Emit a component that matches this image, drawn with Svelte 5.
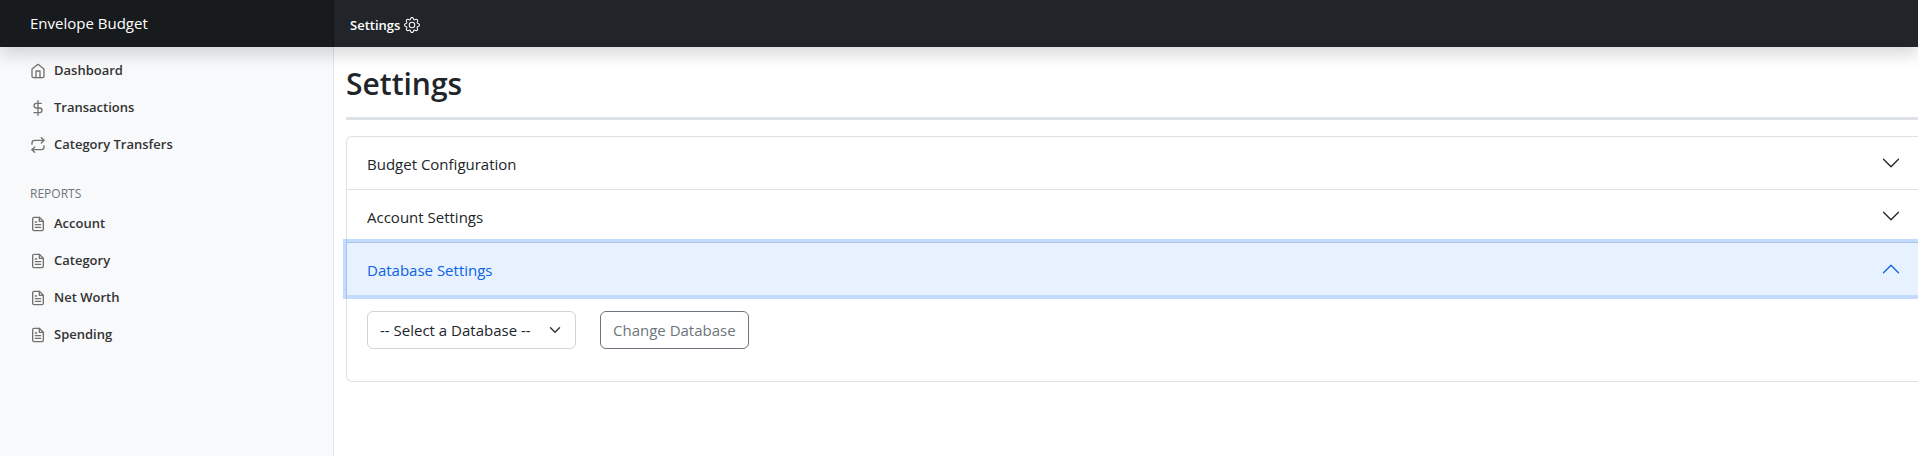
<script>
  const mainLinks = [
    { label: 'Dashboard', icon: 'home' },
    { label: 'Transactions', icon: 'dollar' },
    { label: 'Category Transfers', icon: 'repeat' }
  ];
  const reportLinks = ['Account', 'Category', 'Net Worth', 'Spending'];
  const sections = ['Budget Configuration', 'Account Settings', 'Database Settings'];

  let open = $state(2);
  let focused = $state(2);

  function toggle(i) {
    open = open === i ? -1 : i;
    focused = i;
  }
</script>

{#snippet icon(name)}
  <svg class="icon" viewBox="0 0 24 24" aria-hidden="true">
    {#if name === 'home'}
      <path d="M3 9l9-7 9 7v11a2 2 0 0 1-2 2H5a2 2 0 0 1-2-2z" />
      <path d="M9 22V12h6v10" />
    {:else if name === 'dollar'}
      <path d="M12 1v22" />
      <path d="M17 5H9.500a3.500 3.500 0 0 0 0 7h5a3.500 3.500 0 0 1 0 7H6" />
    {:else if name === 'repeat'}
      <path d="M17 1l4 4-4 4" />
      <path d="M3 11V9a4 4 0 0 1 4-4h14" />
      <path d="M7 23l-4-4 4-4" />
      <path d="M21 13v2a4 4 0 0 1-4 4H3" />
    {:else}
      <path d="M14 2H6a2 2 0 0 0-2 2v16a2 2 0 0 0 2 2h12a2 2 0 0 0 2-2V8z" />
      <path d="M14 2v6h6" />
      <path d="M16 13H8M16 17H8M10 9H8" />
    {/if}
  </svg>
{/snippet}

<div class="page">
  <header class="topbar">
    <a class="brand" href="#home">Envelope Budget</a>
    <a class="top-link" href="#settings">
      Settings
      <svg class="gear" viewBox="0 0 16 16" aria-hidden="true">
        <path d="M8 4.754a3.246 3.246 0 1 0 0 6.492 3.246 3.246 0 0 0 0-6.492zM5.754 8a2.246 2.246 0 1 1 4.492 0 2.246 2.246 0 0 1-4.492 0z" />
        <path d="M9.796 1.343c-.527-1.790-3.065-1.790-3.592 0l-.094.319a.873.873 0 0 1-1.255.520l-.292-.160c-1.640-.892-3.433.902-2.540 2.541l.159.292a.873.873 0 0 1-.520 1.255l-.319.094c-1.790.527-1.790 3.065 0 3.592l.319.094a.873.873 0 0 1 .520 1.255l-.160.292c-.892 1.640.901 3.434 2.541 2.540l.292-.159a.873.873 0 0 1 1.255.520l.094.319c.527 1.790 3.065 1.790 3.592 0l.094-.319a.873.873 0 0 1 1.255-.520l.292.160c1.640.893 3.434-.902 2.540-2.541l-.159-.292a.873.873 0 0 1 .520-1.255l.319-.094c1.790-.527 1.790-3.065 0-3.592l-.319-.094a.873.873 0 0 1-.520-1.255l.160-.292c.893-1.640-.902-3.433-2.541-2.540l-.292.159a.873.873 0 0 1-1.255-.520l-.094-.319zm-2.633.283c.246-.835 1.428-.835 1.674 0l.094.319a1.873 1.873 0 0 0 2.693 1.115l.291-.160c.764-.415 1.600.420 1.184 1.185l-.159.292a1.873 1.873 0 0 0 1.116 2.692l.318.094c.835.246.835 1.428 0 1.674l-.319.094a1.873 1.873 0 0 0-1.115 2.693l.160.291c.415.764-.420 1.600-1.185 1.184l-.291-.159a1.873 1.873 0 0 0-2.693 1.116l-.094.318c-.246.835-1.428.835-1.674 0l-.094-.319a1.873 1.873 0 0 0-2.692-1.115l-.292.160c-.764.415-1.600-.420-1.184-1.185l.159-.291A1.873 1.873 0 0 0 1.945 8.930l-.319-.094c-.835-.246-.835-1.428 0-1.674l.319-.094A1.873 1.873 0 0 0 3.060 4.377l-.160-.292c-.415-.764.420-1.600 1.185-1.184l.292.159a1.873 1.873 0 0 0 2.692-1.115l.094-.319z" />
      </svg>
    </a>
  </header>

  <div class="body">
    <nav class="sidebar" aria-label="Main">
      <ul>
        {#each mainLinks as link}
          <li><a href="#{link.icon}">{@render icon(link.icon)}{link.label}</a></li>
        {/each}
      </ul>
      <h2>Reports</h2>
      <ul>
        {#each reportLinks as label}
          <li><a href="#report">{@render icon('file')}{label}</a></li>
        {/each}
      </ul>
    </nav>

    <main>
      <h1>Settings</h1>
      <hr />
      <div class="accordion">
        {#each sections as title, i}
          <section>
            <button
              type="button"
              class="toggle"
              class:open={open === i}
              class:focused={focused === i}
              aria-expanded={open === i}
              onclick={() => toggle(i)}
            >
              {title}
              <svg class="chevron" viewBox="0 0 16 16" aria-hidden="true">
                <path fill-rule="evenodd" d="M1.646 4.646a.5.5 0 0 1 .708 0L8 10.293l5.646-5.647a.5.5 0 0 1 .708.708l-6 6a.5.5 0 0 1-.708 0l-6-6a.5.5 0 0 1 0-.708z" />
              </svg>
            </button>
            {#if open === i && i === 2}
              <div class="panel">
                <div class="select-wrap">
                  <select aria-label="Database">
                    <option>-- Select a Database --</option>
                  </select>
                  <svg viewBox="0 0 16 16" aria-hidden="true"><path d="M2 5l6 6 6-6" /></svg>
                </div>
                <button type="button" class="change">Change Database</button>
              </div>
            {/if}
          </section>
        {/each}
      </div>
    </main>
  </div>
</div>

<style>
  :global(body) {
    margin: 0;
    background: #fff;
  }

  .page {
    --sidebar: 334px;
    display: flex;
    flex-direction: column;
    min-height: 100vh;
    color: #212529;
    font: 400 15px/24px 'Open Sans', 'Noto Sans', sans-serif;
  }

  .page :is(a, button, select, h1, h2, hr, ul, nav, main, div) {
    box-sizing: border-box;
  }

  a {
    color: inherit;
    text-decoration: none;
  }

  .topbar {
    position: relative;
    z-index: 1;
    display: flex;
    height: 47px;
    background: #212529;
    color: #fff;
    box-shadow: 0 8px 16px rgba(0, 0, 0, 0.15);
  }

  .brand {
    flex: 0 0 var(--sidebar);
    padding: 11px 30px;
    background: rgba(0, 0, 0, 0.25);
    box-shadow: inset -1px 0 0 rgba(0, 0, 0, 0.25);
  }

  .top-link {
    display: flex;
    align-items: center;
    gap: 4px;
    padding: 2px 16px 0;
    font-size: 13px;
    font-weight: 600;
  }

  .gear {
    width: 16px;
    height: 16px;
    fill: currentColor;
  }

  .body {
    flex: 1;
    display: flex;
  }

  .sidebar {
    flex: 0 0 var(--sidebar);
    padding-top: 4px;
    background: #f8f9fa;
    border-right: 1px solid #dee2e6;
    font-size: 13px;
    font-weight: 600;
  }

  ul {
    margin: 0;
    padding: 0;
    list-style: none;
  }

  .sidebar a {
    display: flex;
    align-items: center;
    gap: 8px;
    height: 37px;
    padding: 0 30px;
    color: #333;
  }

  .icon {
    width: 16px;
    height: 16px;
    margin-top: 2px;
    fill: none;
    stroke: #727272;
    stroke-width: 2;
    stroke-linecap: round;
    stroke-linejoin: round;
  }

  h2 {
    margin: 24px 0 0;
    padding: 0 30px;
    color: #6c757d;
    font-size: 12px;
    font-weight: 400;
    line-height: 16px;
    text-transform: uppercase;
  }

  h2 + ul {
    padding-top: 2px;
  }

  main {
    flex: 1;
    min-width: 0;
    padding: 17px 0 0 12px;
  }

  h1 {
    margin: 0;
    font-size: 30px;
    font-weight: 600;
    line-height: 40px;
  }

  hr {
    margin: 13px 0 16px;
    border: 0;
    border-top: 3px solid #dee2e6;
  }

  .accordion {
    border: 1px solid #dee2e6;
    border-right: 0;
    border-radius: 6px 0 0 6px;
  }

  section + section {
    border-top: 1px solid #dee2e6;
  }

  .toggle {
    position: relative;
    display: flex;
    align-items: center;
    justify-content: space-between;
    width: 100%;
    height: 52px;
    padding: 2px 17px 0 20px;
    border: 0;
    border-radius: 6px 0 0 0;
    background: none;
    color: inherit;
    font: inherit;
    text-align: left;
  }

  .toggle.open {
    border-radius: 0;
    background: #e7f1ff;
    color: #0c63e4;
  }

  .toggle.focused {
    outline: 0;
    box-shadow: 0 0 0 4px rgba(13, 110, 253, 0.25);
  }

  .chevron {
    width: 20px;
    height: 20px;
    margin-bottom: 2px;
    fill: currentColor;
  }

  .open .chevron {
    transform: rotate(180deg);
  }

  .panel {
    display: flex;
    flex-wrap: wrap;
    gap: 24px;
    padding: 16px 20px 32px;
  }

  .select-wrap {
    position: relative;
  }

  select {
    width: 209px;
    height: 38px;
    padding: 0 36px 0 12px;
    border: 1px solid #ced4da;
    border-radius: 6px;
    appearance: none;
    background: #fff;
    color: inherit;
    font: inherit;
  }

  .select-wrap svg {
    position: absolute;
    top: 13px;
    right: 15px;
    width: 12px;
    height: 12px;
    fill: none;
    stroke: #343a40;
    stroke-width: 2;
    stroke-linecap: round;
    stroke-linejoin: round;
    pointer-events: none;
  }

  .change {
    height: 38px;
    padding: 0 12px;
    border: 1px solid #6c757d;
    border-radius: 6px;
    background: none;
    color: #6c757d;
    font: inherit;
  }
</style>
